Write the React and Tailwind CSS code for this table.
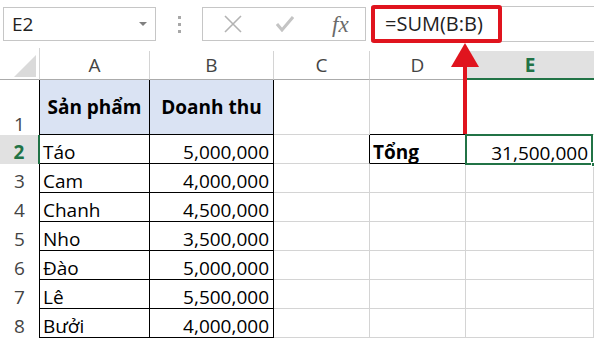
const FONT = { fontFamily: '"Open Sans", "Noto Sans", sans-serif' };

const cols = ['A', 'B', 'C', 'D', 'E'];
const colWidths = 'grid-cols-[40px_110px_124px_96px_96px_128px]';
const rowHeights = 'grid-rows-[32px_55px_29px_29px_29px_29px_29px_29px_29px]';

const rows = [
  ['Táo', '5,000,000'],
  ['Cam', '4,000,000'],
  ['Chanh', '4,500,000'],
  ['Nho', '3,500,000'],
  ['Đào', '5,000,000'],
  ['Lê', '5,500,000'],
  ['Bưởi', '4,000,000'],
];

function FormulaBar() {
  return (
    <div className="h-[48px] flex items-center pl-[3px] bg-white">
      <div className="w-[153px] h-[34px] border border-[#c6c6c6] flex items-center justify-between pl-[8px] pr-[8px]">
        <span className="text-[19px] text-[#222]">E2</span>
        <svg width="8" height="5" viewBox="0 0 8 5">
          <path d="M0 0h8L4 4z" fill="#808080" />
        </svg>
      </div>
      <div className="w-[46px] flex flex-col items-center gap-[4px]">
        <span className="w-[3px] h-[3px] bg-[#a8a8a8]" />
        <span className="w-[3px] h-[3px] bg-[#a8a8a8]" />
        <span className="w-[3px] h-[3px] bg-[#a8a8a8]" />
      </div>
      <div className="w-[164px] h-[34px] border border-[#c6c6c6] flex items-center">
        <svg className="ml-[20px]" width="20" height="18" viewBox="0 0 20 18">
          <path d="M2 1l16 16M18 1L2 17" stroke="#b3b3b3" strokeWidth="1.6" fill="none" />
        </svg>
        <svg className="ml-[33px]" width="18" height="16" viewBox="0 0 18 16">
          <path d="M1 8l5 6L17 1" stroke="#c4c4c4" strokeWidth="3" fill="none" />
        </svg>
        <span
          className="ml-[38px] text-[23px] italic text-[#6a6a6a] leading-none"
          style={{ fontFamily: '"Liberation Serif", "DejaVu Serif", serif' }}
        >
          fx
        </span>
      </div>
      <div className="relative flex-1 h-[36px] ml-[5px] border-y border-[#c6c6c6] flex items-center">
        <div className="absolute left-0 top-[-2px] w-[131px] h-[38px] border-[4px] border-[#e0141e] rounded-[3px]" />
        <span className="pl-[14px] text-[20px] text-[#222]">=SUM(B:B)</span>
      </div>
    </div>
  );
}

function Sheet() {
  const grid = 'border-[#d4d4d4]';
  return (
    <div className={`relative grid ${colWidths} ${rowHeights} leading-[22px]`}>
      {/* column headers */}
      <div className="border-b border-r border-b-[#ababab] border-r-[#d4d4d4] flex items-end justify-end pr-[3px] pb-[2px]">
        <svg width="22" height="22" viewBox="0 0 22 22">
          <path d="M22 0V22H0z" fill="#dadada" />
        </svg>
      </div>
      {cols.map((c) =>
        c === 'E' ? (
          <div
            key={c}
            className="bg-[#e1e1e1] border-b-2 border-b-[#217346] flex items-center justify-center text-[19px] font-bold text-[#217346] mt-[3px]"
          >
            {c}
          </div>
        ) : (
          <div
            key={c}
            className="border-b border-r border-b-[#ababab] border-r-[#d4d4d4] mt-[3px] flex items-center justify-center text-[19px] text-[#444]"
          >
            {c}
          </div>
        )
      )}

      {/* row 1 */}
      <div className="border-r border-black flex items-end justify-center text-[19px] text-[#444]">1</div>
      <div className="bg-[#dae3f3] border-r border-b border-black flex items-center justify-center text-[19px] font-bold text-black">
        Sản phẩm
      </div>
      <div className="bg-[#dae3f3] border-r border-b border-black flex items-center justify-center text-[19px] font-bold text-black">
        Doanh thu
      </div>
      <div className={`border-r border-b ${grid}`} />
      <div className={`border-r border-b ${grid} border-b-black`} />
      <div className={`border-b ${grid}`} />

      {rows.map(([name, value], i) => {
        const n = i + 2;
        const active = n === 2;
        return [
          <div
            key={`h${n}`}
            className={
              active
                ? 'bg-[#e1e1e1] border-r-2 border-[#217346] flex items-end justify-center pb-[1px] text-[19px] font-bold text-[#217346]'
                : 'border-r border-black flex items-end justify-center pb-[1px] text-[19px] text-[#444]'
            }
          >
            {n}
          </div>,
          <div key={`a${n}`} className="border-r border-b border-black flex items-end pl-[3px] text-[19px] text-black">
            {name}
          </div>,
          <div key={`b${n}`} className="border-r border-b border-black flex items-end justify-end pr-[4px] text-[19px] text-black">
            {value}
          </div>,
          <div key={`c${n}`} className={`border-r border-b ${grid} ${active ? 'border-r-black' : ''}`} />,
          active ? (
            <div key={`d${n}`} className="border-r border-b border-black flex items-end pl-[3px] text-[19px] font-bold text-black">
              Tổng
            </div>
          ) : (
            <div key={`d${n}`} className={`border-r border-b ${grid}`} />
          ),
          active ? (
            <div key={`e${n}`} className="relative flex items-end justify-end pr-[6px] text-[19px] text-black">
              31,500,000
              <div className="absolute inset-[-1px] right-[1px] border-2 border-[#217346]" />
              <div className="absolute right-[-2px] bottom-[-3px] w-[5px] h-[5px] bg-[#217346] border border-white" />
            </div>
          ) : (
            <div key={`e${n}`} className={`border-b ${grid} border-r`} />
          ),
        ];
      })}

      {/* red arrow from the total cell up to the formula */}
      <svg className="absolute left-[448px] top-[-5px]" width="34" height="91" viewBox="0 0 34 91">
        <path d="M15 22h4v69h-4z" fill="#e0141e" />
        <path d="M17 0L31 24H3z" fill="#e0141e" />
      </svg>
    </div>
  );
}

export default function App() {
  return (
    <div className="w-[594px] h-[340px] overflow-hidden bg-white" style={FONT}>
      <FormulaBar />
      <Sheet />
    </div>
  );
}
